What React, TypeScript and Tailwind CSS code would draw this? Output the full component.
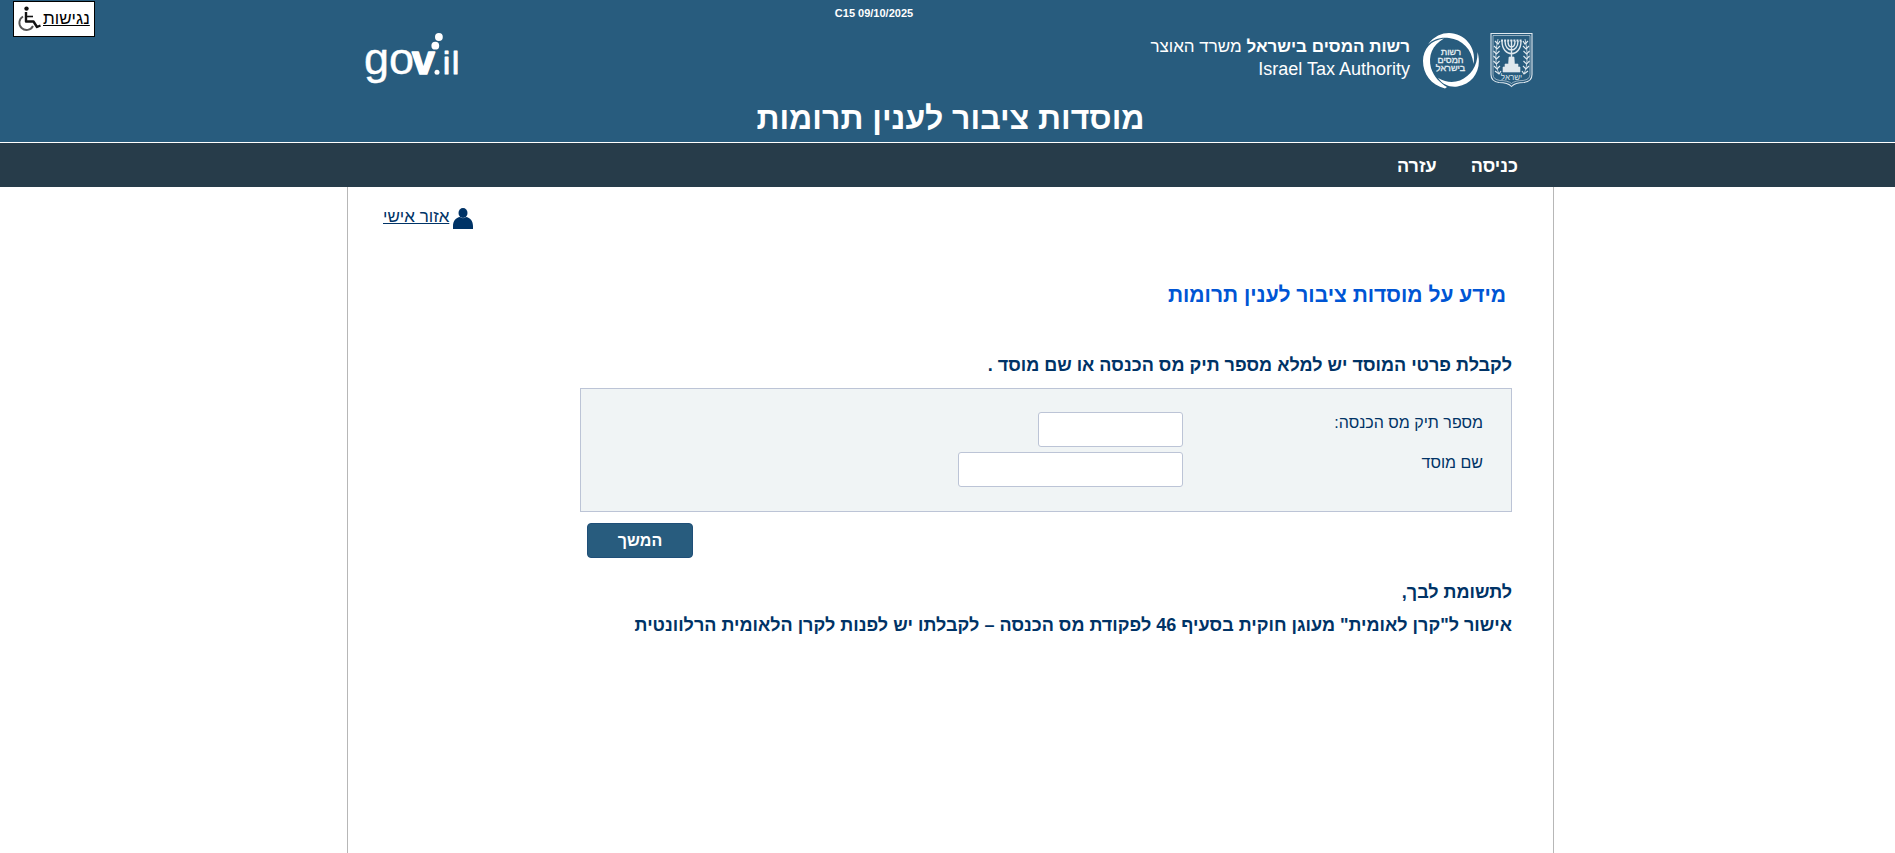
import React from "react";

function GovLogo() {
  return (
    <svg width="94" height="58" viewBox="0 0 94 58" role="img" aria-label="gov.il" direction="ltr">
      <g fill="#fff" stroke="#fff" fontFamily="'Liberation Sans', Arial, sans-serif">
        <text x="-1" y="42" fontSize="45" strokeWidth=".4">go</text>
        <text x="47" y="42" fontSize="41" fontWeight="700" strokeWidth="1.600" strokeLinejoin="round">v</text>
        <text x="78" y="42" fontSize="32" strokeWidth="1" strokeLinejoin="round">i</text>
        <text x="87" y="42" fontSize="32" strokeWidth="1" strokeLinejoin="round">l</text>
      </g>
      <circle cx="72" cy="40.300" r="2.500" fill="#fff" />
      <circle cx="70.300" cy="13.700" r="3.900" fill="#fff" />
      <circle cx="73.900" cy="5" r="3.900" fill="#fff" />
    </svg>
  );
}

function TaxEmblem() {
  return (
    <svg width="58" height="58" viewBox="0 0 58 58" aria-hidden="true">
      <g fill="#fff">
        <path d="M6 12.500C12 4 20 1 27 1c15 0 28 14 24.500 31C50 17 40 7.500 27 6 18 5 11 7.500 6 12.500Z" />
        <path d="M22 6.500C10 13 6 24 9 36c3 9 9 15 16 19l-2 1.500C9 53 1 42 1 29 1 17 9 8 22 6.500Z" />
        <path d="M55.500 20c5 17-4 32-20 34.500C28 55.500 21 53 16 46c8 4.500 15 5 22 2.500C49 44 56 33 55.500 20Z" />
      </g>
      <g fill="#e6eef3" stroke="#e6eef3" strokeWidth=".3" fontFamily="'Liberation Sans', Arial, sans-serif" fontSize="9" textAnchor="middle">
        <text x="29" y="23">רשות</text>
        <text x="28.500" y="31">המסים</text>
        <text x="28.500" y="39">בישראל</text>
      </g>
    </svg>
  );
}

function StateEmblem() {
  return (
    <svg width="43" height="56" viewBox="0 0 43 56" fill="none" stroke="#dfe8ee" aria-hidden="true">
      <path d="M1 1.500h41v41q0 7-8 8-9 0-12.500 4Q18 50.500 9 50.500q-8-1-8-8Z" strokeWidth="1.100" />
      <path d="M3 3.500h37v39q0 5-7 6-8 0-11.500 3Q18 48.500 10 48.500q-7-1-7-6Z" strokeWidth=".6" />
      <path d="M12 9c0 17 19 17 19 0M15 9c0 12 13 12 13 0M18 9c0 8 7 8 7 0M21.500 8v22" strokeWidth="1.400" />
      <path d="M11 8.500h21" strokeWidth="1.800" strokeDasharray="2 1.100" />
      <path d="M19 25h5l.5 7h3.500v3h2v5H13v-5h2v-3h3.500Z" fill="#dfe8ee" strokeWidth=".6" />
      <path d="M9 42C5 33 5 20 8 7M34 42c4-9 4-22 1-35" strokeWidth=".8" />
      <path d="M5 9l3 3 2-3M4 14l3 3 3-3M3.500 19l3 3 3-3M3.500 24l3 3 3-3M3.500 29l3 3 3-3M4 34l3 3 3-3M5 39l4 3 2-3M33 9l2 3 3-3M33 14l3 3 3-3M33.500 19l3 3 3-3M33.500 24l3 3 3-3M33.500 29l3 3 3-3M33 34l3 3 3-3M32 39l2 3 4-3" strokeWidth="1.200" />
      <text x="21.500" y="47.500" fontSize="8" fill="#dfe8ee" stroke="none" textAnchor="middle" fontFamily="'Liberation Sans', Arial, sans-serif">ישראל</text>
    </svg>
  );
}

function WheelchairIcon() {
  return (
    <svg width="26" height="26" viewBox="0 0 26 26" fill="none" aria-hidden="true">
      <circle cx="10.500" cy="2.600" r="2.200" fill="#111" />
      <path d="M10 6v9.500h7.500l3.500 5.500 3.500-1.500" stroke="#111" strokeWidth="2.400" strokeLinejoin="round" />
      <path d="M10 10.500h7" stroke="#111" strokeWidth="1.600" />
      <path d="M7 10.500a7.200 7.200 0 1 0 10 9.500" stroke="#555" strokeWidth="1.900" />
    </svg>
  );
}

function UserIcon() {
  return (
    <svg width="20" height="22" viewBox="0 0 20 22" fill="#003366" aria-hidden="true">
      <ellipse cx="10" cy="6" rx="4.500" ry="5" />
      <path d="M0 22v-3c0-5 3-8.500 7-9 2 1.500 4 1.500 6 0 4 .5 7 4 7 9v3Z" />
    </svg>
  );
}

export default function App() {
  return (
    <div dir="rtl" className="flex min-h-screen flex-col bg-white font-['Liberation_Sans',Arial,sans-serif] text-[#003366]">
      <a
        href="#accessibility"
        className="absolute top-px left-[13px] flex h-9 w-[82px] items-center justify-end gap-px border border-black bg-white pl-0.5 text-[17px] text-black"
      >
        <span className="underline">נגישות</span>
        <WheelchairIcon />
      </a>

      <header className="border-b border-white bg-[#285c7e] pl-1.5 text-white">
        <div className="mx-auto flex w-full max-w-[1207px] flex-col">
          <p dir="ltr" className="h-8 pt-[5px] pr-[153px] text-center text-[11px] leading-4 font-bold">
            C15 09/10/2025
          </p>
          <div className="flex h-[62px] items-start justify-between pr-[21px] pl-[18px]">
            <div className="flex items-start">
              <StateEmblem />
              <div className="mr-2.5">
                <TaxEmblem />
              </div>
              <div className="mr-3 pt-1 leading-[22px]">
                <p className="text-[17px]">
                  <strong>רשות המסים בישראל</strong> משרד האוצר
                </p>
                <p dir="ltr" className="text-right text-[18px]">Israel Tax Authority</p>
              </div>
            </div>
            <GovLogo />
          </div>
          <h1 className="h-12 text-center text-[32px] leading-[48px] font-bold">מוסדות ציבור לענין תרומות</h1>
        </div>
      </header>

      <nav className="bg-[#273c4a] pl-1.5 text-white">
        <div className="mx-auto flex h-11 w-full max-w-[1207px] items-center gap-[34px] pt-0.5 pr-9 text-[18px] font-bold">
          <a href="#login">כניסה</a>
          <a href="#help">עזרה</a>
        </div>
      </nav>

      <div className="flex flex-1 pl-1.5">
        <main className="mx-auto w-full max-w-[1207px] border-x border-[#b7b7b7] pr-[41px] pl-[35px]">
          <div className="flex h-[60px] items-start justify-end gap-1 pt-5">
            <UserIcon />
            <a href="#personal" className="text-[17px] leading-5 underline">אזור אישי</a>
          </div>

          <h2 className="mt-[34px] pr-1.5 text-[21px] leading-7 font-bold text-[#0055d4]">מידע על מוסדות ציבור לענין תרומות</h2>

          <form className="max-w-[932px]" onSubmit={(e) => e.preventDefault()}>
            <p className="mt-[44px] text-[18px] leading-6 font-bold">
              לקבלת פרטי המוסד יש למלא מספר תיק מס הכנסה או שם מוסד .
            </p>
            <div className="mt-[11px] flex flex-col gap-[5px] border border-[#bcc4d6] bg-[#f0f4f5] px-7 pt-[23px] pb-6">
              <div className="flex">
                <label htmlFor="file" className="w-[300px] text-[16px] leading-[22px]">מספר תיק מס הכנסה:</label>
                <input id="file" type="text" className="h-[35px] w-[145px] rounded-[3px] border border-[#bcc4d6] bg-white px-2" />
              </div>
              <div className="flex">
                <label htmlFor="name" className="w-[300px] text-[16px] leading-[22px]">שם מוסד</label>
                <input id="name" type="text" className="h-[35px] w-[225px] rounded-[3px] border border-[#bcc4d6] bg-white px-2" />
              </div>
            </div>
            <div className="mt-[11px] flex justify-end pl-[7px]">
              <button type="submit" className="h-[35px] w-[106px] rounded-[4px] border border-[#1f4f78] bg-[#285c7e] text-[16px] font-bold text-white">
                המשך
              </button>
            </div>
          </form>

          <section className="mt-[18px] text-[18px] leading-[33px] font-bold">
            <p>לתשומת לבך,</p>
            <p>אישור ל"קרן לאומית" מעוגן חוקית בסעיף 46 לפקודת מס הכנסה – לקבלתו יש לפנות לקרן הלאומית הרלוונטית</p>
          </section>
        </main>
      </div>
    </div>
  );
}
